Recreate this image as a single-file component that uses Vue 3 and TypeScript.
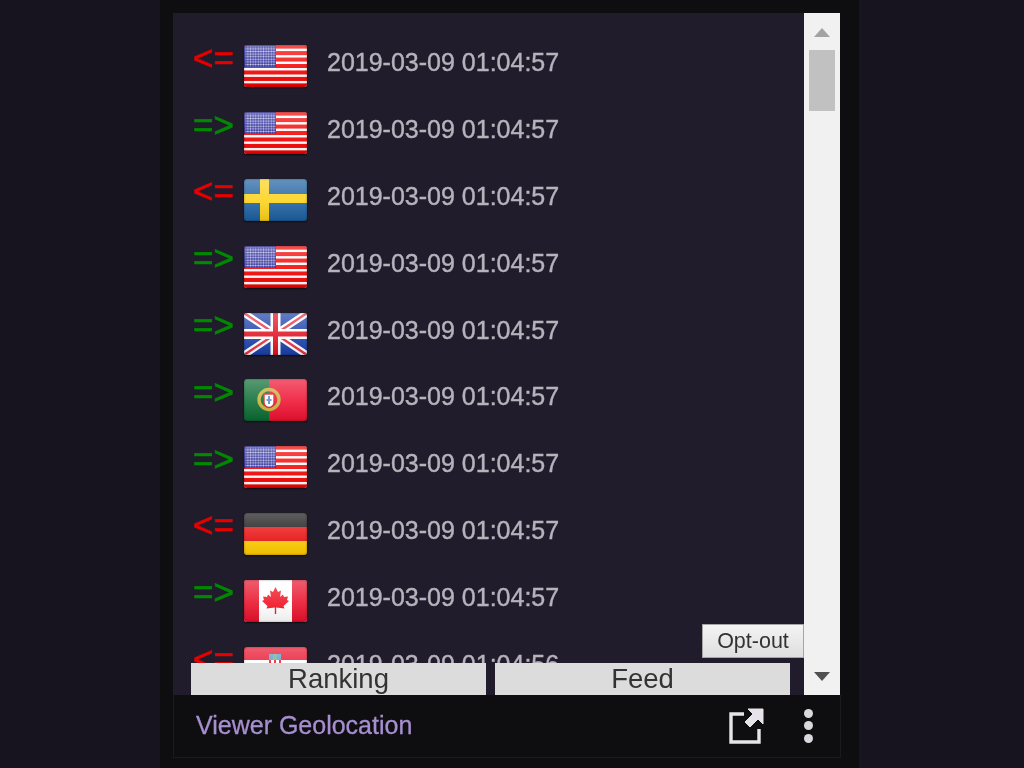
<script setup lang="ts">
type Row = { dir: 'in' | 'out'; flag: string; time: string }

const t = '2019-03-09 01:04:57'

const rows: Row[] = [
  { dir: 'in', flag: 'us', time: t },
  { dir: 'out', flag: 'us', time: t },
  { dir: 'in', flag: 'se', time: t },
  { dir: 'out', flag: 'us', time: t },
  { dir: 'out', flag: 'gb', time: t },
  { dir: 'out', flag: 'pt', time: t },
  { dir: 'out', flag: 'us', time: t },
  { dir: 'in', flag: 'de', time: t },
  { dir: 'out', flag: 'ca', time: t },
  { dir: 'in', flag: 'hr', time: '2019-03-09 01:04:56' },
]

const stripes = [0, 2, 4, 6, 8, 10, 12]
const stripeH = 42 / 13
</script>

<template>
  <div class="page">
    <div class="panel">
      <div class="main">
        <div class="left">
          <div class="list">
            <div v-for="(row, i) in rows" :key="i" class="row">
              <span class="arrow" :class="row.dir">{{ row.dir === 'in' ? '<=' : '=>' }}</span>
              <span class="flag">
                <svg viewBox="0 0 63 42" width="63" height="42">
                  <template v-if="row.flag === 'us'">
                    <rect width="63" height="42" fill="#fff" />
                    <rect v-for="s in stripes" :key="s" x="0" :y="s * stripeH - 0.4" width="63" :height="stripeH + 0.8" fill="#f40000" />
                    <rect width="32" height="22" fill="#14148c" />
                    <pattern id="stars" width="2.6" height="2.6" patternUnits="userSpaceOnUse">
                      <circle cx="1.3" cy="1.3" r="0.95" fill="#c8c8f0" />
                    </pattern>
                    <rect x="1.5" y="1.5" width="30" height="20" fill="url(#stars)" />
                  </template>
                  <template v-else-if="row.flag === 'se'">
                    <rect width="63" height="42" fill="#1c5f9f" />
                    <rect x="16" width="9" height="42" fill="#fcd116" />
                    <rect y="15" width="63" height="9" fill="#fcd116" />
                  </template>
                  <template v-else-if="row.flag === 'gb'">
                    <rect width="63" height="42" fill="#1a3fa8" />
                    <path d="M0 0L63 42M63 0L0 42" stroke="#fff" stroke-width="7" />
                    <path d="M0 0L63 42M63 0L0 42" stroke="#e83040" stroke-width="2.4" />
                    <rect x="26.5" width="10" height="42" fill="#fff" />
                    <rect y="16" width="63" height="10" fill="#fff" />
                    <rect x="29" width="5" height="42" fill="#e01020" />
                    <rect y="18.5" width="63" height="5" fill="#e01020" />
                  </template>
                  <template v-else-if="row.flag === 'pt'">
                    <rect width="25" height="42" fill="#0a6a32" />
                    <rect x="25" width="38" height="42" fill="#ee1030" />
                    <circle cx="25" cy="20.5" r="10" fill="none" stroke="#c4b038" stroke-width="3.4" />
                    <path d="M20 15h10v8.5a5 5 0 0 1-10 0z" fill="#fff" stroke="#d82020" stroke-width="1.4" />
                    <path d="M25 17v8M22.5 21h5" stroke="#5a8cc8" stroke-width="2" />
                  </template>
                  <template v-else-if="row.flag === 'de'">
                    <rect width="63" height="14" fill="#141414" />
                    <rect y="14" width="63" height="14" fill="#e81010" />
                    <rect y="28" width="63" height="14" fill="#ffcc00" />
                  </template>
                  <template v-else-if="row.flag === 'ca'">
                    <rect width="63" height="42" fill="#fff" />
                    <rect width="15" height="42" fill="#e8102a" />
                    <rect x="48" width="15" height="42" fill="#e8102a" />
                    <polygon
                      points="31.5,7 34,12 37,10.5 36,17 39,14.5 40,17 44,16.5 43,20 45,21 39.5,26 40.5,28.5 32.2,27.5 32.2,34 30.8,34 30.8,27.5 22.5,28.5 23.5,26 18,21 20,20 19,16.5 23,17 24,14.5 27,17 26,10.5 29,12"
                      fill="#f01020"
                    />
                  </template>
                  <template v-else>
                    <rect width="63" height="13" fill="#e8102a" />
                    <rect y="13" width="63" height="15" fill="#fff" />
                    <rect y="28" width="63" height="14" fill="#1c3f9f" />
                    <rect x="25" y="7" width="4" height="6" fill="#5a9ac8" />
                    <rect x="29" y="7" width="4" height="6" fill="#6ab090" />
                    <rect x="33" y="7" width="4" height="6" fill="#5a9ac8" />
                    <rect x="25" y="13" width="12" height="14" fill="#e8102a" />
                    <rect x="27" y="13" width="3" height="3" fill="#fff" />
                    <rect x="32" y="13" width="3" height="3" fill="#fff" />
                  </template>
                </svg>
              </span>
              <span class="time">{{ row.time }}</span>
            </div>
          </div>
          <div class="tabs">
            <button class="tab">Ranking</button>
            <button class="tab">Feed</button>
          </div>
          <button class="optout">Opt-out</button>
        </div>
        <div class="scrollbar">
          <span class="tri up"></span>
          <div class="track"><div class="thumb"></div></div>
          <span class="tri down"></span>
        </div>
      </div>
      <div class="footer">
        <span class="title">Viewer Geolocation</span>
        <div class="actions">
          <svg class="popout" viewBox="0 0 36 36" width="36" height="36">
            <path d="M16 6H3v28h28V21" fill="none" stroke="#e6e4ea" stroke-width="3.4" />
            <path d="M35 1v15l-5-5-8 8-5-5 8-8-5-5z" fill="#e6e4ea" stroke="#e6e4ea" stroke-width="1" stroke-linejoin="round" />
          </svg>
          <div class="dots"><i></i><i></i><i></i></div>
        </div>
      </div>
    </div>
  </div>
</template>

<style>
html,
body {
  margin: 0;
  background: #17141f;
  overflow: hidden;
}
</style>

<style scoped>
.page {
  width: 1024px;
  height: 768px;
  padding-left: 160px;
  box-sizing: border-box;
  font-family: 'Liberation Sans', Arial, sans-serif;
}

.panel {
  width: 699px;
  height: 768px;
  background: #0e0e10;
  padding: 13px 18px 0 13px;
  box-sizing: border-box;
  filter: blur(0.6px);
}

.main {
  display: flex;
  height: 682px;
}

.left {
  position: relative;
  width: 631px;
  display: flex;
  flex-direction: column;
  background: #201c2b;
}

.list {
  flex: 1;
  min-height: 0;
  overflow: hidden;
  padding: 20px 0 0 20px;
}

.row {
  display: flex;
  align-items: center;
  height: 66.8px;
}

.arrow {
  width: 51px;
  font-size: 35px;
  line-height: 40px;
  margin-bottom: 17px;
  white-space: pre;
  -webkit-text-stroke: 0.7px currentColor;
}

.arrow.in {
  color: #e60000;
}

.arrow.out {
  color: #008a00;
}

.flag {
  position: relative;
  display: block;
  width: 63px;
  height: 42px;
  border-radius: 3px;
  overflow: hidden;
  box-shadow: 0 1px 2px rgba(0, 0, 0, 0.6);
}

.flag svg {
  display: block;
}

.flag::after {
  content: '';
  position: absolute;
  inset: 0;
  border-radius: 3px;
  background: linear-gradient(rgba(255, 255, 255, 0.32), rgba(255, 255, 255, 0.12) 55%, rgba(0, 0, 0, 0.08));
  box-shadow: inset 0 0 2px rgba(0, 0, 0, 0.45);
}

.time {
  margin-left: 20px;
  margin-bottom: 7px;
  font-size: 25px;
  color: #b6b3bc;
  -webkit-text-stroke: 0.4px currentColor;
}

.tabs {
  display: flex;
  gap: 9px;
  height: 32px;
  padding: 0 14px 0 18px;
}

.tab {
  flex: 1;
  border: 0;
  padding: 0;
  background: #dcdcdc;
  color: #333;
  font-family: inherit;
  font-size: 27.5px;
  line-height: 32px;
}

.optout {
  position: absolute;
  right: 0;
  bottom: 37px;
  width: 102px;
  height: 34px;
  padding: 0;
  border: 1px solid #a5a5a5;
  background: linear-gradient(#f4f4f4, #dedede);
  color: #333;
  font-family: inherit;
  font-size: 21.5px;
}

.scrollbar {
  width: 36px;
  display: flex;
  flex-direction: column;
  align-items: center;
  background: #f1f1f1;
}

.tri {
  flex: none;
  width: 0;
  height: 0;
  border-left: 8px solid transparent;
  border-right: 8px solid transparent;
}

.tri.up {
  margin-top: 15px;
  border-bottom: 9px solid #a3a3a3;
}

.tri.down {
  margin-bottom: 14px;
  border-top: 9px solid #505050;
}

.track {
  flex: 1;
  width: 100%;
  padding: 13px 5px 0 5px;
  box-sizing: border-box;
}

.thumb {
  height: 61px;
  background: #c1c1c1;
}

.footer {
  width: 668px;
  height: 63px;
  box-sizing: border-box;
  display: flex;
  align-items: center;
  justify-content: space-between;
  padding: 0 27px 0 22px;
  border: 1px solid #1b1b1e;
  border-top: 0;
}

.title {
  font-size: 25px;
  color: #a68fd0;
  margin-bottom: 1px;
  -webkit-text-stroke: 0.3px currentColor;
}

.actions {
  display: flex;
  align-items: center;
  gap: 40px;
}

.popout {
  display: block;
}

.dots {
  display: flex;
  flex-direction: column;
  gap: 3.5px;
  margin-bottom: 1px;
}

.dots i {
  display: block;
  width: 9px;
  height: 9px;
  border-radius: 50%;
  background: #dad8de;
}
</style>
